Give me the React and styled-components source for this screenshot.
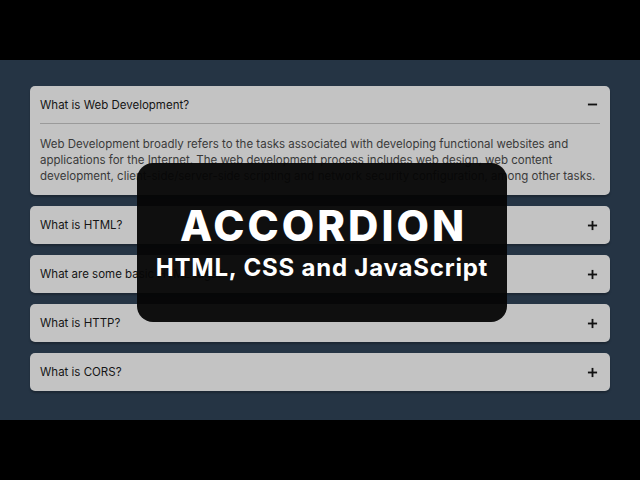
import React from 'react';
import styled, { createGlobalStyle } from 'styled-components';

const GlobalStyle = createGlobalStyle`
    html, body {
        margin: 0;
        background: #000;
    }
    body {
        font-family: Inter, "Open Sans", sans-serif;
    }
`;

const Frame = styled.div`
    width: 640px;
    height: 480px;
    background: #000;
    display: flex;
    flex-direction: column;
    justify-content: center;
`;

const Stage = styled.main`
    position: relative;
    height: 360px;
    box-sizing: border-box;
    background: #253444;
    padding: 26px 30px 0;
    display: flex;
    flex-direction: column;
    gap: 11px;
`;

const Item = styled.section`
    background: #c3c3c3;
    border-radius: 5px;
    box-shadow: 0 2px 2px rgba(0, 0, 0, 0.25);
    padding: 0 10px;
`;

const Header = styled.div`
    height: 38px;
    box-sizing: border-box;
    display: flex;
    align-items: center;
    justify-content: space-between;
    font-size: 11.5px;
    color: #151515;
    border-bottom: ${p => (p.open ? '1px solid #9a9a9a' : 'none')};
`;

const Body = styled.p`
    margin: 0;
    padding: 12px 0 11px;
    font-size: 11.5px;
    line-height: 16px;
    color: #3a3a3a;
`;

const Toggle = styled.svg`
    width: 11px;
    height: 11px;
    margin-right: 2px;
`;

const Banner = styled.div`
    position: absolute;
    left: 137px;
    top: 103px;
    width: 370px;
    height: 159px;
    border-radius: 16px;
    background: rgba(5, 5, 5, 0.95);
    color: #fff;
    display: flex;
    flex-direction: column;
    align-items: center;
    justify-content: center;
    gap: 9px;
`;

const Title = styled.h1`
    margin: 0 0 0 3px;
    font-size: 42px;
    font-weight: 800;
    line-height: 1;
    letter-spacing: 3px;
`;

const Subtitle = styled.h2`
    margin: 0;
    font-size: 24px;
    font-weight: 700;
    line-height: 1;
    letter-spacing: 0.8px;
`;

const Icon = ({ open }) => (
    <Toggle viewBox="0 0 12 12">
        <path d="M1 6h10" stroke="#111" strokeWidth="2" />
        {!open && <path d="M6 1v10" stroke="#111" strokeWidth="2" />}
    </Toggle>
);

const faqs = [
    {
        q: 'What is Web Development?',
        a: 'Web Development broadly refers to the tasks associated with developing functional websites and applications for the Internet. The web development process includes web design, web content development, client-side/server-side scripting and network security configuration, among other tasks.',
        open: true,
    },
    { q: 'What is HTML?' },
    { q: 'What are some basic HTML tags?' },
    { q: 'What is HTTP?' },
    { q: 'What is CORS?' },
];

export default function App() {
    return (
        <Frame>
            <GlobalStyle />
            <Stage>
                {faqs.map(f => (
                    <Item key={f.q}>
                        <Header open={f.open}>
                            <span>{f.q}</span>
                            <Icon open={f.open} />
                        </Header>
                        {f.open && <Body>{f.a}</Body>}
                    </Item>
                ))}
                <Banner>
                    <Title>ACCORDION</Title>
                    <Subtitle>HTML, CSS and JavaScript</Subtitle>
                </Banner>
            </Stage>
        </Frame>
    );
}
